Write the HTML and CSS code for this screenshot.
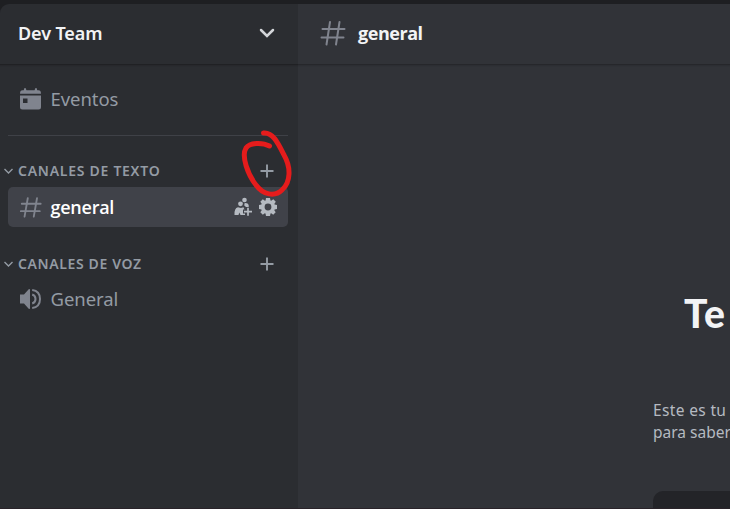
FILE: index.html
```
<!DOCTYPE html>
<html lang="es">
<head>
<meta charset="utf-8">
<title>Dev Team</title>
<link rel="stylesheet" href="styles.css">
</head>
<body>
<div class="app">
  <aside class="sidebar">
    <header class="server">
      <span class="server-name">Dev Team</span>
      <svg class="server-arrow" width="16" height="12" viewBox="0 0 16 12"><path d="M2 3l6 6 6-6"/></svg>
    </header>
    <div class="row events">
      <svg class="icon" width="24" height="24" viewBox="0 0 24 24"><path fill="currentColor" fill-rule="evenodd" d="M1 6.700Q1 3.300 3.500 3.300H4.700L5.500 1H6.500L7.500 3.300H15.500L16.500 1H17.500L18.300 3.300H19.500Q22 3.300 22 6.700ZM1 8.500H22V20Q22 22.500 19.500 22.500H3.500Q1 22.500 1 20ZM4 11.500V16H8.500V11.500Z"/></svg>
      <span class="label">Eventos</span>
    </div>
    <div class="divider"></div>
    <div class="category">
      <svg class="caret" width="12" height="8" viewBox="0 0 12 8"><path d="M1.500 2l4 4 4-4"/></svg>
      <span class="category-name">CANALES DE TEXTO</span>
      <svg class="plus" width="14" height="14" viewBox="0 0 14 14"><path d="M7 .5v13M.5 7h13"/></svg>
      <svg class="scribble" width="60" height="76" viewBox="240 125 60 76"><path d="M269.500 146C263 142.500 250 142 246 148C241 156 248 175 256 185C263 195 275 197 282 190C291 182 291 167 284 155C278 143 273 132 263.500 133"/></svg>
    </div>
    <div class="row channel selected">
      <svg class="icon hash" width="24" height="24" viewBox="0 0 26 26"><path d="M9.500 3.500L6 23.500M19.500 3.500L16 23.500M3 9.500H23.500M2 17.500H22.500"/></svg>
      <span class="label">general</span>
      <svg class="invite" width="20" height="20" viewBox="0 0 20 20"><g fill="currentColor"><circle cx="11.500" cy="3" r="2.300"/><path d="M11.500 6.200Q14.800 5.600 15.700 8V10H13L11.300 8.400Z"/><circle cx="7.500" cy="6.800" r="2.400"/><path d="M1.500 18Q1 11.300 5 10.300L8 11 10.500 10.300 11.500 12.600H10V16.500H12V18H7.500L6.300 15.500 5.500 18Z"/></g><path d="M15 10.700v8M11 14.700h8" stroke="currentColor" stroke-width="1.700"/></svg>
      <svg class="gear" width="20" height="20" viewBox="0 0 20 20"><path fill="currentColor" fill-rule="evenodd" d="M8 1H12L12.500 3.500 13.200 3.800 15.300 2.300 17.800 4.800 16.300 6.900 16.600 7.600 19 8V12L16.600 12.400 16.300 13.200 17.700 15.300 15.200 17.800 13.200 16.300 12.500 16.600 12 19H8L7.500 16.600 6.800 16.300 4.800 17.700 2.300 15.200 3.700 13.200 3.400 12.400 1 12V8L3.400 7.500 3.700 6.800 2.300 4.800 4.800 2.300 6.900 3.700 7.600 3.400ZM10 6.600A3.400 3.400 0 1 0 10 13.400A3.400 3.400 0 1 0 10 6.600Z"/></svg>
    </div>
    <div class="category voice">
      <svg class="caret" width="12" height="8" viewBox="0 0 12 8"><path d="M1.500 2l4 4 4-4"/></svg>
      <span class="category-name">CANALES DE VOZ</span>
      <svg class="plus" width="14" height="14" viewBox="0 0 14 14"><path d="M7 .5v13M.5 7h13"/></svg>
    </div>
    <div class="row">
      <svg class="icon" width="24" height="24" viewBox="0 0 24 24"><path fill="currentColor" d="M1 7.500H5L9.700 2.300Q11 1.400 11 3V21Q11 22.600 9.700 21.700L5 16.500H1Z"/><path fill="none" stroke="currentColor" stroke-width="2" d="M13.200 7.500Q16.500 8.500 16.500 12T13.200 16.500M13.200 3Q21 4 21 12T13.200 21"/></svg>
      <span class="label">General</span>
    </div>
  </aside>
  <main class="chat">
    <header class="chat-header">
      <svg class="hash" width="28" height="28" viewBox="0 0 28 28"><path d="M11 3L7.500 25.500M20.500 3L17 25.500M3.500 10H25.500M2.500 18.500H24.500"/></svg>
      <span class="chat-name">general</span>
    </header>
    <section class="welcome">
      <h1 class="title">Te</h1>
      <p class="intro"><span class="line-one">Este es tu</span><br>para saber</p>
      <div class="card"></div>
    </section>
  </main>
</div>
</body>
</html>
```
FILE: styles.css
```
* { box-sizing: border-box; }
body {
  margin: 0;
  height: 509px;
  overflow: hidden;
  background: #1e1f22;
  font-family: "Noto Sans", sans-serif;
}
.app { display: flex; height: 509px; padding-top: 4px; border-bottom: 1px solid #292329; overflow: hidden; }
svg { display: block; flex: none; }
.sidebar { width: 298px; flex: none; background: #2b2d31; border-top-left-radius: 9px; color: #949ba4; }
.server {
  height: 61px;
  padding: 0 23px 2px 18px;
  display: flex;
  align-items: center;
  justify-content: space-between;
  border-bottom: 1px solid #202124;
  box-shadow: 0 1px 1px #27282c;
}
.server-name { color: #f2f3f5; font-size: 18px; font-weight: 600; letter-spacing: -0.1px; }
.server-arrow path { fill: none; stroke: #d3d5d9; stroke-width: 2.5; stroke-linecap: round; }
.row {
  height: 40px;
  margin: 0 10px 0 8px;
  padding: 0 10px 0 11px;
  display: flex;
  align-items: center;
  border-radius: 5px;
}
.events { margin-top: 14px; }
.icon { color: #80848e; margin-right: 7.500px; }
.label { font-size: 18.5px; line-height: 26px; letter-spacing: -0.05px; margin-right: auto; }
.divider { height: 1px; margin: 16px 10px 0 8px; background: #3f4147; }
.category { position: relative; height: 51px; padding: 19px 24px 0 3px; display: flex; align-items: center; }
.caret { margin-right: 3px; }
.caret path, .plus path { fill: none; stroke: #949ba4; stroke-width: 1.4; }
.plus path { stroke-width: 1.9; }
.category-name { font-size: 14px; line-height: 20px; font-weight: 600; letter-spacing: 0.73px; margin-right: auto; }
.voice .category-name { letter-spacing: 0.62px; }
.scribble { position: absolute; left: 240px; top: -11px; z-index: 2; }
.scribble path { fill: none; stroke: #e51c1c; stroke-width: 5; stroke-linecap: round; stroke-linejoin: round; }
.selected { background: #404249; }
.selected .label { color: #fff; font-family: "Open Sans", sans-serif; font-size: 18px; font-weight: 600; letter-spacing: -0.25px; }
.hash path { fill: none; stroke: #80848e; stroke-width: 2; stroke-linecap: round; }
.invite, .gear { color: #b5bac1; }
.invite { margin-right: 5px; }
.voice { height: 52px; padding-top: 22px; }
.voice .plus { margin-bottom: 1px; }
.chat { flex: 1; min-width: 0; overflow: hidden; background: #313338; }
.chat-header {
  height: 61px;
  padding: 0 0 2px 21px;
  display: flex;
  align-items: center;
  border-bottom: 1px solid #26272b;
  box-shadow: 0 1px 1px #2c2e33;
}
.chat-name { margin-left: 11px; color: #f2f3f5; font-family: "Open Sans", sans-serif; font-size: 18px; font-weight: 700; letter-spacing: -0.45px; }
.welcome { margin-left: 355px; padding-top: 223px; }
.title { margin: 0 0 0 31px; font: 900 39px/50px Lato, sans-serif; letter-spacing: 1px; color: #f2f3f5; }
.intro { margin: 61px 0 0; color: #b5bac1; font-size: 15.5px; line-height: 22px; white-space: nowrap; }
.line-one { letter-spacing: 0.35px; }
.card { height: 80px; margin-top: 48px; background: #232428; border-top-left-radius: 10px; }
```
